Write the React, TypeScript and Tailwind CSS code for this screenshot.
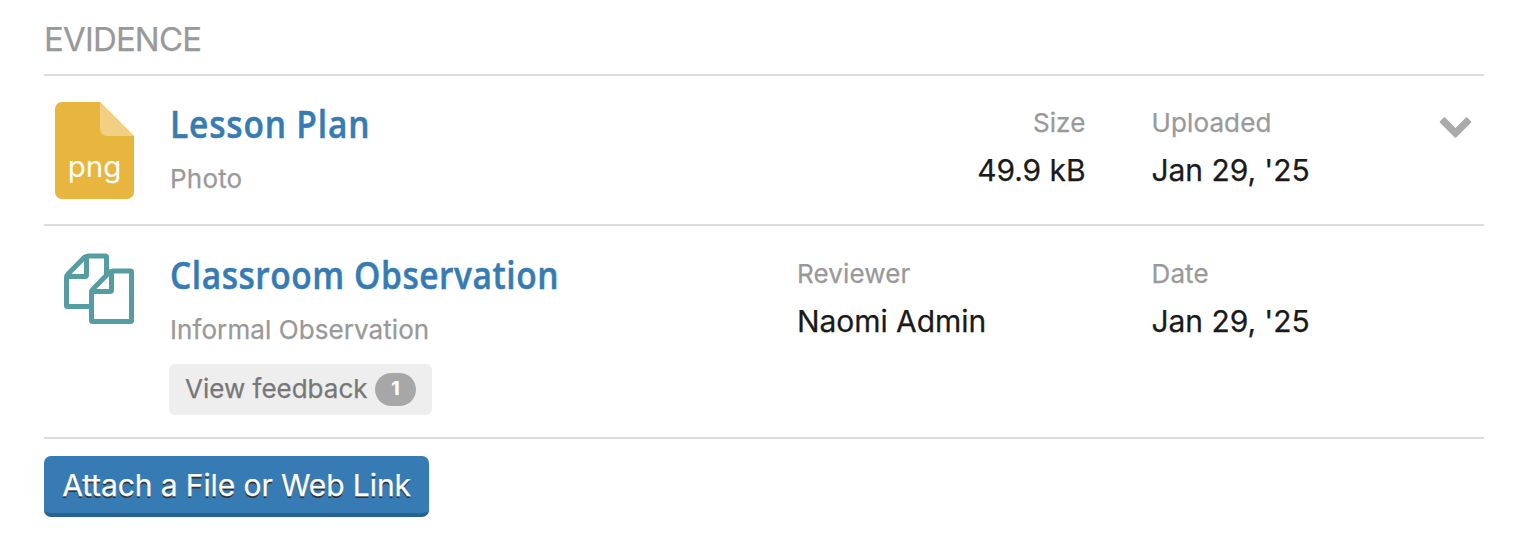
import type { ReactNode } from "react";

function FileIcon() {
  return (
    <svg width="80" height="98" viewBox="0 0 80 98" className="block">
      <path d="M7 0H45L79 34V90a7 7 0 0 1-7 7H7a7 7 0 0 1-7-7V7a7 7 0 0 1 7-7Z" fill="#e8b63e" />
      <path d="M45 0L79 34H52a7 7 0 0 1-7-7Z" fill="#f1d083" />
      <text x="39.500" y="74.500" textAnchor="middle" fill="#fff" className="font-['Inter',sans-serif] text-[29.5px]">
        png
      </text>
    </svg>
  );
}

function CopyIcon() {
  return (
    <svg
      width="72"
      height="72"
      viewBox="0 0 72 72"
      fill="none"
      stroke="#569da2"
      strokeWidth="5"
      strokeLinejoin="round"
      className="block"
    >
      <path d="M28 53.500H4.500Q3.500 53.500 3.500 52.500V24.500Q3.500 22.500 5 21L20.500 5.200Q22.500 3 25.500 3H42.500Q43.500 3 43.500 4V21" />
      <path d="M3.500 23.500H22Q23.500 23.500 23.500 22V3" />
      <path d="M28.500 67.500V39.500Q28.500 37.500 30 36L45.500 20.200Q47.500 18 50.500 18H67.500Q68.500 18 68.500 19V67.500Q68.500 68.500 67.500 68.500H29.500Q28.500 68.500 28.500 67.500Z" />
      <path d="M28.500 38.500H47Q48.500 38.500 48.500 37V18" />
    </svg>
  );
}

function Field({ label, value, right }: { label: string; value: string; right?: boolean }) {
  return (
    <div className={right ? "text-right" : ""}>
      <div className="text-[26px] leading-[32px] tracking-[0.12px] text-[#999]">{label}</div>
      <div className="mt-[11px] text-[30px] leading-[40px] tracking-[-0.06px] text-[#1a1a1a]">{value}</div>
    </div>
  );
}

function Title({ children, className }: { children: ReactNode; className: string }) {
  return (
    <a
      href="#"
      className={`block w-max origin-left whitespace-nowrap font-['Open_Sans',sans-serif] text-[38.5px] font-semibold leading-[48px] text-[#367bb3] [-webkit-text-stroke:0.5px_#367bb3] ${className}`}
    >
      {children}
    </a>
  );
}

export default function App() {
  return (
    <main className="h-[540px] w-[1524px] overflow-hidden bg-white pl-[44px] pr-[40px] font-['Inter',sans-serif] font-normal">
      <h2 className="h-[76px] border-b-2 border-[#dcdcdc] pt-[19px] text-[33px] leading-[40px] tracking-[-0.85px] text-[#999] [-webkit-text-stroke:0.25px_#999]">
        EVIDENCE
      </h2>

      <section className="flex h-[150px] border-b-2 border-[#dcdcdc]">
        <div className="w-[126px] shrink-0 pl-[11px] pt-[26px]">
          <FileIcon />
        </div>
        <div className="w-[627px] shrink-0 pt-[23px]">
          <Title className="scale-x-[0.87] tracking-[0.95px]">Lesson Plan</Title>
          <div className="mt-[16px] text-[26px] leading-[32px] tracking-[0.2px] text-[#999] [-webkit-text-stroke:0.25px_#999]">Photo</div>
        </div>
        <div className="w-[288.5px] shrink-0 pt-[31px] [-webkit-text-stroke:0.25px]">
          <Field label="Size" value="49.9 kB" right />
        </div>
        <div className="ml-[66px] w-[287.5px] shrink-0 pt-[31px] [-webkit-text-stroke:0.25px]">
          <Field label="Uploaded" value="Jan 29, '25" />
        </div>
        <button aria-label="Expand" className="self-start pt-[41px]">
          <svg width="34" height="23" viewBox="0 0 34 23" className="block">
            <path
              d="M4.700 .6Q5.400 0 6.100 .6L16.500 11L26.900 .6Q27.600 0 28.300 .6L32 4.300Q32.600 5 32 5.700L17.200 20.500Q16.500 21.200 15.800 20.500L1 5.700Q.4 5 1 4.300Z"
              fill="#aaa"
            />
          </svg>
        </button>
      </section>

      <section className="flex h-[213px] border-b-2 border-[#dcdcdc]">
        <div className="w-[126px] shrink-0 pl-[19px] pt-[27px]">
          <CopyIcon />
        </div>
        <div className="w-[627px] shrink-0 pt-[24px]">
          <Title className="scale-x-[0.87] tracking-[0.63px]">Classroom Observation</Title>
          <div className="mt-[16px] text-[26px] leading-[32px] tracking-[0.08px] text-[#999] [-webkit-text-stroke:0.25px_#999]">Informal Observation</div>
          <button className="-ml-px mt-[18px] flex h-[51px] w-[263px] items-center rounded-[6px] bg-[#eee] pl-[16px] text-[26px] text-[#777]">
            <span className="-mt-[2px] whitespace-nowrap [-webkit-text-stroke:0.25px_#777]">View feedback</span>
            <span className="ml-auto mr-[16px] flex h-[33px] w-[41px] items-center justify-center rounded-full bg-[#a7a7a7] text-[19px] font-extrabold text-white">
              1
            </span>
          </button>
        </div>
        <div className="w-[311px] shrink-0 pt-[32px] [-webkit-text-stroke:0.25px]">
          <Field label="Reviewer" value="Naomi Admin" />
        </div>
        <div className="ml-[43.5px] pt-[32px] [-webkit-text-stroke:0.25px]">
          <Field label="Date" value="Jan 29, '25" />
        </div>
      </section>

      <button className="mt-[17px] flex h-[61px] w-[385px] items-center justify-center whitespace-nowrap rounded-[7px] border-b-4 border-[#2a628f] bg-[#367bb3] pt-[2px] text-[30px] tracking-[-0.1px] text-white [-webkit-text-stroke:0.25px_#fff] [text-shadow:0_2px_0_#333]">
        Attach a File or Web Link
      </button>
    </main>
  );
}
